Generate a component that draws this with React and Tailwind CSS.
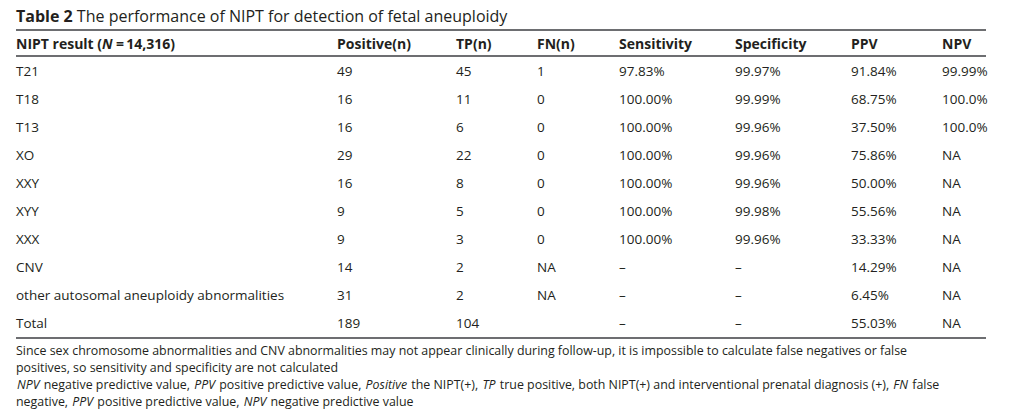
const rows = [
  ["T21", "49", "45", "1", "97.83%", "99.97%", "91.84%", "99.99%"],
  ["T18", "16", "11", "0", "100.00%", "99.99%", "68.75%", "100.0%"],
  ["T13", "16", "6", "0", "100.00%", "99.96%", "37.50%", "100.0%"],
  ["XO", "29", "22", "0", "100.00%", "99.96%", "75.86%", "NA"],
  ["XXY", "16", "8", "0", "100.00%", "99.96%", "50.00%", "NA"],
  ["XYY", "9", "5", "0", "100.00%", "99.98%", "55.56%", "NA"],
  ["XXX", "9", "3", "0", "100.00%", "99.96%", "33.33%", "NA"],
  ["CNV", "14", "2", "NA", "–", "–", "14.29%", "NA"],
  ["other autosomal aneuploidy abnormalities", "31", "2", "NA", "–", "–", "6.45%", "NA"],
  ["Total", "189", "104", "", "–", "–", "55.03%", "NA"],
];

const cols = "grid grid-cols-[321px_119px_81px_82px_116px_116px_91px_44px]";

const Em = ({ children }) => <i className="mx-px">{children}</i>;

export default function App() {
  return (
    <div
      className="w-[1026px] h-[417px] bg-white text-[#231f20] pl-4 pt-[5px]"
      style={{ fontFamily: '"Open Sans", "Noto Sans", sans-serif' }}
    >
      <div className="text-[16px] leading-[22px] whitespace-nowrap">
        <span className="font-bold">Table 2</span> The performance of NIPT for detection of fetal aneuploidy
      </div>
      <div className="w-[970px] mt-[2px]">
        <div className={`${cols} border-t-2 border-b-2 border-[#6d6e71] h-[28px] items-center text-[14px] font-bold whitespace-nowrap`}>
          <div>
            NIPT result (<i className="mr-px">N</i>&thinsp;=&thinsp;14,316)
          </div>
          <div>Positive(n)</div>
          <div>TP(n)</div>
          <div>FN(n)</div>
          <div>Sensitivity</div>
          <div>Specificity</div>
          <div>PPV</div>
          <div>NPV</div>
        </div>
        <div className="border-b-2 border-[#6d6e71]">
          {rows.map((r, i) => (
            <div key={i} className={`${cols} h-[28px] items-center text-[13.5px] whitespace-nowrap`}>
              {r.map((c, j) => (
                <div key={j}>{c}</div>
              ))}
            </div>
          ))}
        </div>
        <div className="text-[12.4px] leading-[17px] pt-[3px] w-[940px]">
          <p>
            Since sex chromosome abnormalities and CNV abnormalities may not appear clinically during follow-up, it is impossible to calculate false negatives or false positives, so sensitivity and specificity are not calculated
          </p>
          <p>
            <Em>NPV</Em> negative predictive value, <Em>PPV</Em> positive predictive value, <Em>Positive</Em> the NIPT(+), <Em>TP</Em> true positive, both NIPT(+) and interventional prenatal diagnosis (+), <Em>FN</Em> false negative, <Em>PPV</Em> positive predictive value, <Em>NPV</Em> negative predictive value
          </p>
        </div>
      </div>
    </div>
  );
}
